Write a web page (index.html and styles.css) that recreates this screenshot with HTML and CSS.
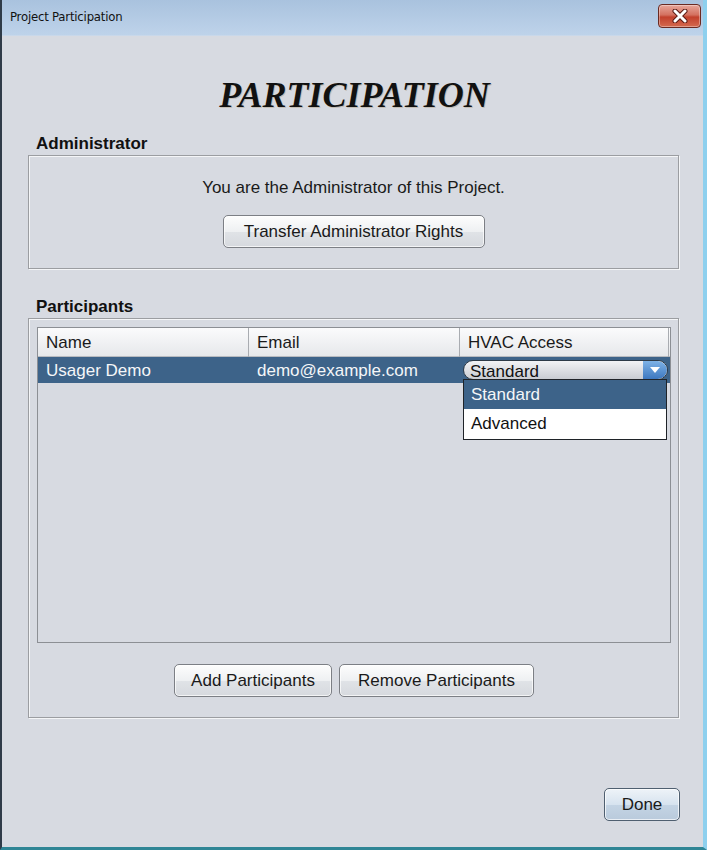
FILE: index.html
```html
<!DOCTYPE html>
<html>
<head>
<meta charset="utf-8">
<title>Project Participation</title>
<link rel="stylesheet" href="styles.css">
</head>
<body>
<div class="window">
  <div class="titlebar">
    <span class="title">Project Participation</span>
    <div class="close">
      <svg width="20" height="14" viewBox="0 0 20 14">
        <path d="M5 2 L15 12 M15 2 L5 12" stroke="#5a1a14" stroke-width="5" stroke-linecap="round"/>
        <path d="M5 2 L15 12 M15 2 L5 12" stroke="#ffffff" stroke-width="3" stroke-linecap="round"/>
      </svg>
    </div>
  </div>
  <div class="content">
    <h1 class="heading">PARTICIPATION</h1>

    <div class="group-label">Administrator</div>
    <div class="group-box admin-box">
      <p class="admin-text">You are the Administrator of this Project.</p>
      <button class="btn transfer">Transfer Administrator Rights</button>
    </div>

    <div class="group-label part-label">Participants</div>
    <div class="group-box part-box">
      <div class="table">
        <div class="thead">
          <div class="th">Name</div>
          <div class="th">Email</div>
          <div class="th last">HVAC Access</div>
        </div>
        <div class="row selected">
          <div class="td">Usager Demo</div>
          <div class="td">demo@example.com</div>
          <div class="td combo-cell">
            <div class="combo">
              <span class="combo-text">Standard</span>
              <span class="combo-arrow">
                <svg width="12" height="8" viewBox="0 0 12 8"><path d="M1 1 L11 1 L6 7 Z" fill="#ffffff"/></svg>
              </span>
            </div>
            <div class="popup">
              <div class="item active">Standard</div>
              <div class="item">Advanced</div>
            </div>
          </div>
        </div>
      </div>
      <div class="btn-row">
        <button class="btn add">Add Participants</button>
        <button class="btn remove">Remove Participants</button>
      </div>
    </div>

    <div class="footer">
      <button class="btn done">Done</button>
    </div>
  </div>
</div>
</body>
</html>
```

FILE: styles.css
```css
* { box-sizing: border-box; }
html, body { margin: 0; padding: 0; }
body {
  width: 707px;
  height: 850px;
  overflow: hidden;
  font-family: "Liberation Sans", Arial, sans-serif;
  background: #d7dae1;
}
.window {
  width: 707px;
  height: 850px;
  display: flex;
  flex-direction: column;
  border-left: 2px solid #2f3b48;
  border-right: 4px solid #8ed0ee;
  border-bottom: 3px solid #2f8595;
  background: #d7dae1;
}
.titlebar {
  height: 36px;
  flex: 0 0 36px;
  display: flex;
  align-items: center;
  justify-content: space-between;
  padding: 0 2px 0 8px;
  background: linear-gradient(#a9c2de, #bed3ea);
  border-bottom: 1px solid #c9d8ea;
}
.title {
  font-family: "DejaVu Sans Condensed", "Liberation Sans", sans-serif;
  font-size: 13px;
  letter-spacing: -0.2px;
  color: #111;
  margin-top: -2px;
}
.close {
  width: 43px;
  height: 24px;
  margin-top: -4px;
  border: 1px solid #6a2a22;
  border-radius: 4px;
  background: linear-gradient(#e7a79b 0%, #d4705f 45%, #c2402c 55%, #d46a4f 100%);
  display: flex;
  align-items: center;
  justify-content: center;
  box-shadow: inset 0 0 0 1px rgba(255,255,255,0.35);
}
.content {
  flex: 1;
  display: flex;
  flex-direction: column;
  padding: 0 22px 0 26px;
}
.heading {
  margin: 39px 0 0;
  height: 40px;
  line-height: 40px;
  text-align: center;
  font-family: "Liberation Serif", "Times New Roman", serif;
  font-style: italic;
  font-weight: bold;
  font-size: 36px;
  color: #111;
  text-shadow: 1px 1px 0 rgba(150,120,70,0.3);
}
.group-label {
  margin: 20px 0 0 8px;
  height: 18px;
  line-height: 18px;
  font-size: 17px;
  font-weight: bold;
  color: #111;
}
.part-label { margin-top: 29px; }
.group-box {
  margin-top: 2px;
  width: 651px;
  border: 1px solid #9b9da1;
  box-shadow: inset 1px 1px 0 #f4f5f7, 1px 1px 0 #f4f5f7;
}
.admin-box {
  height: 114px;
  display: flex;
  flex-direction: column;
  align-items: center;
  padding-top: 22px;
}
.admin-text {
  margin: 0;
  height: 20px;
  line-height: 20px;
  font-size: 17px;
  color: #1a1a1a;
}
.btn {
  font-family: "Liberation Sans", Arial, sans-serif;
  font-size: 17px;
  color: #1a1a1a;
  height: 33px;
  border: 1px solid #7c7f85;
  border-radius: 5px;
  background: linear-gradient(#fdfdfd 0%, #eef0f2 50%, #e0e3e7 51%, #d6d9de 100%);
  box-shadow: inset 0 0 0 1px rgba(255,255,255,0.7);
  padding: 0;
  cursor: default;
}
.transfer { margin-top: 17px; width: 262px; }
.part-box {
  height: 400px;
  padding: 8px 7px 0 8px;
  display: flex;
  flex-direction: column;
}
.table {
  width: 634px;
  height: 316px;
  border: 1px solid #8c8f94;
  background: #d7dae1;
  overflow: visible;
}
.thead {
  display: grid;
  grid-template-columns: 211px 211px 1fr;
  height: 29px;
  background: linear-gradient(#fbfbfc, #e6e8eb);
  border-bottom: 1px solid #b8bbc0;
}
.th {
  font-size: 17px;
  line-height: 29px;
  padding-left: 8px;
  color: #1a1a1a;
  border-right: 1px solid #a9acb1;
}
.th.last { border-right: 1px solid #a9acb1; margin-right: 1px; }
.row {
  display: grid;
  grid-template-columns: 211px 211px 1fr;
  height: 26px;
}
.row.selected { background: #3d6389; }
.td {
  font-size: 17px;
  line-height: 27px;
  padding-left: 8px;
  color: #f4f6f8;
}
.combo-cell {
  position: relative;
  padding: 3px 2px 0 3px;
}
.combo {
  height: 20px;
  width: 205px;
  border: 1px solid #2d3a47;
  border-radius: 10px;
  background: linear-gradient(#f2f3f5, #c9ccd2);
  display: flex;
  align-items: center;
  justify-content: space-between;
  padding-left: 6px;
  overflow: hidden;
}
.combo-text {
  font-size: 17px;
  color: #111;
  line-height: 18px;
  margin-top: 3px;
}
.combo-arrow {
  width: 24px;
  height: 18px;
  background: linear-gradient(#7eb2e6, #3d78c0);
  border-radius: 0 9px 9px 0;
  display: flex;
  align-items: center;
  justify-content: center;
}
.popup {
  position: absolute;
  left: 3px;
  top: 22px;
  width: 204px;
  border: 1px solid #1f2328;
  background: #ffffff;
  z-index: 5;
}
.item {
  height: 30px;
  line-height: 30px;
  padding-left: 7px;
  font-size: 17px;
  color: #111;
}
.item.active {
  background: #3d6389;
  color: #f4f6f8;
  height: 29px;
}
.btn-row {
  margin-top: 21px;
  display: flex;
  justify-content: center;
  gap: 7px;
}
.add { width: 158px; }
.remove { width: 195px; }
.footer {
  margin-top: 70px;
  width: 652px;
  display: flex;
  justify-content: flex-end;
}
.done {
  width: 76px;
  border-color: #4f5f70;
  background: linear-gradient(#eef3f8 0%, #d7e3ef 50%, #c4d4e4 51%, #b9cadc 100%);
}
```
